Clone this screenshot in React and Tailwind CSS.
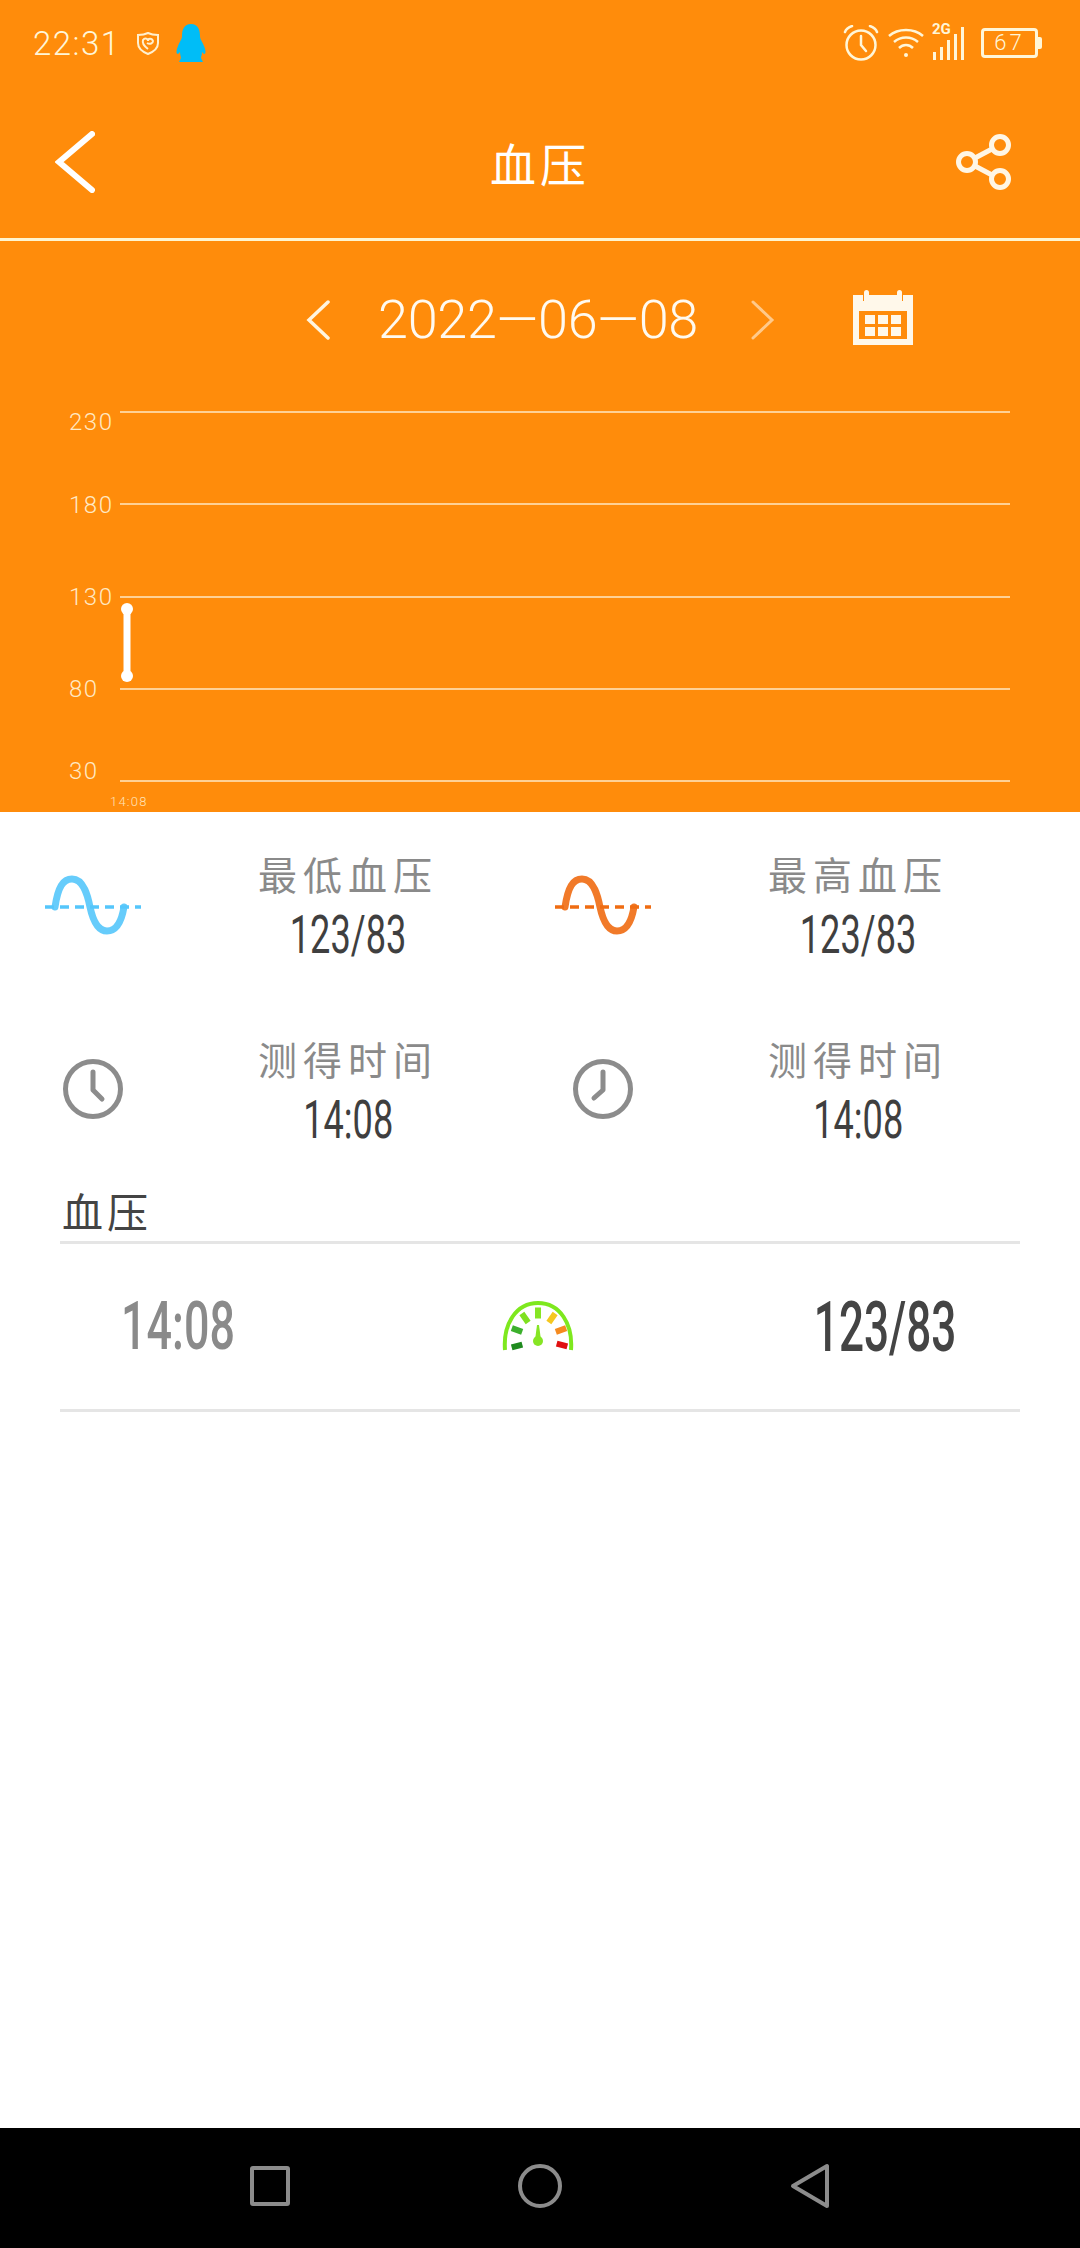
import { Fragment } from 'react';

const cjk = { fontFamily: '"Noto Sans CJK SC", sans-serif' };

function SineIcon({ color }) {
  return (
    <svg width="98" height="62" viewBox="0 0 98 62" fill="none" stroke={color}>
      <path d="M11 32 C14 12 19 4 28 4 C40 4 44 22 46 32 C49 46 54 56 63 56 C73 56 78 44 80 32" strokeWidth="7" strokeLinecap="round" opacity="0.9" />
      <path d="M1 32 H97" strokeWidth="3.5" strokeDasharray="9 6" />
    </svg>
  );
}

function ClockIcon({ hand }) {
  return (
    <svg width="62" height="62" viewBox="0 0 62 62" fill="none" stroke="#8c8c8c" className="mt-[-5px]">
      <circle cx="31" cy="31" r="27.5" strokeWidth="5" />
      <path d={hand} strokeWidth="5" strokeLinecap="round" strokeLinejoin="round" />
    </svg>
  );
}

function Stat({ icon, label, value }) {
  return (
    <div className="flex items-start">
      <div className="flex h-[100px] w-[186px] shrink-0 items-center justify-center pt-[8px]">{icon}</div>
      <div className="flex w-[324px] flex-col items-center">
        <div className="mt-[-4px] text-[39px] leading-[50px] tracking-[6px] text-[#8a8a8a]" style={cjk}>{label}</div>
        <div className="mt-[6px] scale-x-[0.67] font-[Roboto] text-[54px] font-normal leading-[62px] text-[#3f3f3f]">{value}</div>
      </div>
    </div>
  );
}

function Chart() {
  const rows = [
    ['230', 12, 30, 69],
    ['180', 104, 113, 69],
    ['130', 197, 205, 69],
    ['80', 289, 297, 69],
    ['30', 381, 379, 69],
  ];
  return (
    <svg width="1080" height="412" viewBox="0 0 1080 412" className="block">
      {rows.map(([label, lineY, textY, textX]) => (
        <Fragment key={label}>
          <line x1="120" x2="1010" y1={lineY} y2={lineY} stroke="#ffe9c4" strokeWidth="1.5" />
          <text x={textX} y={textY} fill="#ffe9c4" fontFamily="Roboto" fontWeight="300" fontSize="24" letterSpacing="1.5">{label}</text>
        </Fragment>
      ))}
      <line x1="127" x2="127" y1="209" y2="276" stroke="#ffffff" strokeWidth="7" />
      <circle cx="127" cy="209" r="6" fill="#ffffff" />
      <circle cx="127" cy="276" r="6" fill="#ffffff" />
      <text x="110" y="406" fill="#ffe3b8" fontFamily="Roboto" fontWeight="300" fontSize="13" letterSpacing="1.2">14:08</text>
    </svg>
  );
}

function StatusLeft() {
  return (
    <div className="flex items-center">
      <span className="w-[103px] pl-[33px] font-[Roboto] text-[33px] font-light leading-none tracking-[1.5px] text-[#fff6d8]">22:31</span>
      <svg width="24" height="24" viewBox="0 0 24 24" fill="none" stroke="#fff0cf" strokeWidth="2" className="ml-[33px]">
        <path d="M12 2 C8 4 5 4 2 4 V12 C2 17 7 21 12 23 C17 21 22 17 22 12 V4 C19 4 16 4 12 2 Z" />
        <path d="M12 18 C8 15 6 12 7 9 C9 6 12 8 12 10 C12 7 16 7 17 10 C17 12 14 14 11 12" />
      </svg>
      <svg width="32" height="38" viewBox="0 0 32 38" className="ml-[15px]" fill="#00bdf7">
        <path d="M16 0 C23 0 25 6 25 12 C25 15 27 17 29 22 C31 27 31 30 29 30 L27 28 C27 31 26 33 26 34 L28 38 H4 L6 34 C6 33 5 31 5 28 L3 30 C1 30 1 27 3 22 C5 17 7 15 7 12 C7 6 9 0 16 0 Z" />
      </svg>
    </div>
  );
}

function StatusRight() {
  return (
    <div className="flex items-center pr-[38px]">
      <svg width="36" height="36" viewBox="0 0 36 36" fill="none" stroke="#fff6d8" strokeWidth="2.5" strokeLinecap="round">
        <circle cx="18" cy="20" r="14.5" />
        <path d="M18 11 V20 L23 26" />
        <path d="M2 7 C3 4 6 2 9 1 M34 7 C33 4 30 2 27 1" />
      </svg>
      <svg width="36" height="30" viewBox="0 0 36 30" fill="none" stroke="#fff6d8" strokeWidth="2.5" className="ml-[9px]">
        <path d="M1 8 C10 0 26 0 35 8 M6 14 C13 8 23 8 30 14 M11 20 C15 16 21 16 25 20" />
        <circle cx="18" cy="27" r="2" fill="#fff6d8" stroke="none" />
      </svg>
      <div className="relative ml-[8px] flex h-[33px] w-[36px] items-end gap-[4px] pl-[1px]">
        <span className="absolute left-0 top-[-5px] font-[Roboto] text-[15px] font-bold leading-none text-[#fff6d8]">2G</span>
        <span className="h-[8px] w-[3px] bg-[#fff6d8]" />
        <span className="h-[13px] w-[3px] bg-[#fff6d8]" />
        <span className="h-[20px] w-[3px] bg-[#fff6d8]" />
        <span className="h-[26px] w-[3px] bg-[#fff6d8]" />
        <span className="h-[33px] w-[3px] bg-[#fff6d8]" />
      </div>
      <div className="ml-[13px] flex items-center">
        <div className="flex h-[30px] w-[57px] items-center justify-center rounded-[4px] border-[3px] border-[#fff6d8] font-[Roboto] text-[22px] font-light leading-none tracking-[3px] text-[#fff6d8]">67</div>
        <span className="h-[12px] w-[4px] rounded-r-[2px] bg-[#fff6d8]" />
      </div>
    </div>
  );
}

function Gauge() {
  const ticks = [
    [15, 46, -105, '#1f8a1f'],
    [15, 30, -70, '#3cb02c'],
    [23, 18, -35, '#7fe01f'],
    [36, 13, 0, '#86e524'],
    [50, 18, 35, '#f5c71f'],
    [59, 30, 70, '#f58a1f'],
    [60, 45, 105, '#e01010'],
  ];
  return (
    <svg width="76" height="54" viewBox="0 0 76 54" fill="none">
      <path d="M3 50 C1 24 14 3 36 3 C58 3 71 24 69 50" stroke="#7ee81e" strokeWidth="4" />
      {ticks.map(([x, y, angle, color]) => (
        <rect key={angle} x={x - 3} y={y - 5.5} width="6" height="11" fill={color} transform={`rotate(${angle} ${x} ${y})`} />
      ))}
      <path d="M35 25 H37 L39 40 H33 Z" fill="#86e524" />
      <circle cx="36" cy="41" r="5" fill="#86e524" />
    </svg>
  );
}

export default function App() {
  return (
    <div className="flex h-[2248px] w-[1080px] flex-col bg-white" style={{ fontFamily: 'Roboto, sans-serif' }}>
      <div className="bg-[#ff8c0b]">
        <div className="flex h-[86px] items-center justify-between">
          <StatusLeft />
          <StatusRight />
        </div>
        <div className="relative flex h-[152px] items-center justify-between pl-[55px] pr-[68px]">
          <svg width="40" height="62" viewBox="0 0 40 62" fill="none" stroke="#ffffff" strokeWidth="6" strokeLinecap="round">
            <path d="M37 3 L4 31 L37 59" />
          </svg>
          <span className="absolute left-[490px] top-[46px] text-[46px] leading-[60px] tracking-[4px] text-white" style={cjk}>血压</span>
          <svg width="56" height="56" viewBox="0 0 56 56" fill="none" stroke="#fff6e5" strokeWidth="5">
            <circle cx="44" cy="11" r="8.5" />
            <circle cx="11" cy="28" r="8.5" />
            <circle cx="44" cy="45" r="8.5" />
            <path d="M36 15 L19 24 M19 32 L36 41" />
          </svg>
        </div>
        <div className="h-[3px] bg-[#fff5cf]" />

        <div className="flex h-[159px] items-center pb-[2px] pl-[306px]">
          <svg width="24" height="40" viewBox="0 0 24 40" fill="none" stroke="#fff5e0" strokeWidth="3.5" strokeLinecap="round">
            <path d="M22 2 L3 20 L22 38" />
          </svg>
          <span className="ml-[48px] w-[320px] whitespace-nowrap font-[Roboto] text-[54px] font-light leading-none tracking-[-0.3px] text-[#fffaf0]">2022—06—08</span>
          <svg width="24" height="40" viewBox="0 0 24 40" fill="none" stroke="#ffc98a" strokeWidth="3" strokeLinecap="round" className="ml-[53px]">
            <path d="M2 2 L21 20 L2 38" />
          </svg>
          <svg width="60" height="56" viewBox="0 0 60 56" className="ml-[78px] mt-[-5px]">
            <path fillRule="evenodd" fill="#fff8ea" d="M0 6 H10 V12 H16 V6 H44 V12 H50 V6 H60 V56 H0 Z M6 22 V50 H54 V22 Z" />
            <rect x="11" y="1" width="5" height="13" rx="2.5" fill="#fff8ea" />
            <rect x="44" y="1" width="5" height="13" rx="2.5" fill="#fff8ea" />
            <g fill="#fff8ea">
              <rect x="12" y="26" width="10" height="9" />
              <rect x="25" y="26" width="10" height="9" />
              <rect x="38" y="26" width="10" height="9" />
              <rect x="12" y="38" width="10" height="9" />
              <rect x="25" y="38" width="10" height="9" />
              <rect x="38" y="38" width="10" height="9" />
            </g>
          </svg>
        </div>

        <Chart />
      </div>

      <div className="grid grid-cols-[510px_1fr] grid-rows-[185px_148px] pt-[40px]">
        <Stat icon={<SineIcon color="#55c6fb" />} label="最低血压" value="123/83" />
        <Stat icon={<SineIcon color="#ef6c12" />} label="最高血压" value="123/83" />
        <Stat icon={<ClockIcon hand="M31 14 V32 L40 41" />} label="测得时间" value="14:08" />
        <Stat icon={<ClockIcon hand="M31 14 V32 L22 40" />} label="测得时间" value="14:08" />
      </div>

      <div className="mx-[60px]">
        <div className="border-b-[3px] border-[#e5e5e5] pb-[6px] pl-[2px] text-[41px] leading-[50px] tracking-[4px] text-[#444444]" style={cjk}>血压</div>
        <div className="flex h-[165px] items-center">
          <span className="w-[236px] scale-x-[0.68] text-center font-[Roboto] text-[66px] font-medium leading-none text-[#8a8a8a]">14:08</span>
          <div className="ml-[206px] flex w-[76px] justify-start"><Gauge /></div>
          <span className="ml-[194px] scale-x-[0.63] font-[Roboto] text-[70px] font-medium leading-none text-[#444444]">123/83</span>
        </div>
        <div className="h-[3px] bg-[#e5e5e5]" />
      </div>

      <div className="flex-1" />

      <div className="flex h-[120px] items-center justify-between bg-black pb-[4px] pl-[250px] pr-[250px]">
        <span className="h-[40px] w-[40px] rounded-[3px] border-[4px] border-[#8c8c8c]" />
        <span className="h-[44px] w-[44px] rounded-full border-[4px] border-[#8c8c8c]" />
        <svg width="40" height="46" viewBox="0 0 40 46" fill="none" stroke="#8c8c8c" strokeWidth="4" strokeLinejoin="round">
          <path d="M37 3 V43 L3 23 Z" />
        </svg>
      </div>
    </div>
  );
}
